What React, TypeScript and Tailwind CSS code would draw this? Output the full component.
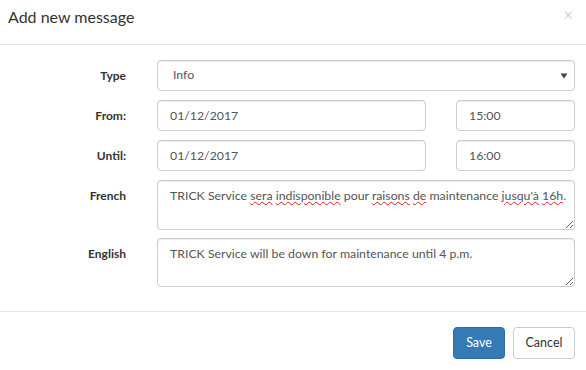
import React from "react";

const font = { fontFamily: "Lato, 'Open Sans', Arial, sans-serif" };

function Caret() {
  return (
    <svg width="8" height="6" viewBox="0 0 8 6" className="pointer-events-none absolute right-[7px] top-[13px]">
      <path d="M0.5 0.5 L7.5 0.5 L4 5.5 Z" fill="#444" />
    </svg>
  );
}

function Label({ children }: { children: React.ReactNode }) {
  return (
    <div className="flex h-[31px] w-[126px] shrink-0 items-center justify-end text-[12px] font-bold text-[#333]">
      {children}
    </div>
  );
}

const inputCls =
  "h-[31px] rounded-[4px] border border-[#ccc] bg-white px-[12px] text-[12.3px] text-[#555] shadow-[inset_0_1px_1px_rgba(0,0,0,0.075)] outline-none";

const Squiggle = ({ children }: { children: React.ReactNode }) => (
  <span className="underline decoration-wavy decoration-[#d0201a] decoration-1 underline-offset-[1px]">
    {children}
  </span>
);

export default function App() {
  return (
    <div className="min-h-screen w-[586px] bg-white text-[#333]" style={font}>
      {/* header */}
      <div className="flex h-[45px] items-start justify-between border-b border-[#e5e5e5] pl-[8px] pr-[13px] pt-[8px]">
        <h4 className="text-[16px] font-normal leading-[18px] text-[#333]">Add new message</h4>
        <button className="text-[17px] leading-[14px] text-black/20">×</button>
      </div>

      {/* body */}
      <div className="flex flex-col pb-[24px] pr-[11px] pt-[15px]">
        <div className="flex items-start">
          <Label>Type</Label>
          <div className="relative ml-[31px] flex-1">
            <select
              className={`${inputCls} w-full appearance-none pl-[15px]`}
              defaultValue="Info"
            >
              <option>Info</option>
              <option>Warning</option>
              <option>Error</option>
            </select>
            <Caret />
          </div>
        </div>

        <div className="mt-[9px] flex items-start">
          <Label>From:</Label>
          <input className={`${inputCls} ml-[31px] w-[269px]`} defaultValue="01/12/2017" />
          <input className={`${inputCls} ml-[30px] min-w-0 flex-1`} defaultValue="15:00" />
        </div>

        <div className="mt-[9px] flex items-start">
          <Label>Until:</Label>
          <input className={`${inputCls} ml-[31px] w-[269px]`} defaultValue="01/12/2017" />
          <input className={`${inputCls} ml-[30px] min-w-0 flex-1`} defaultValue="16:00" />
        </div>

        <div className="mt-[9px] flex items-start">
          <Label>French</Label>
          <div
            className={`${inputCls} ml-[31px] h-[50px] flex-1 resize-y overflow-hidden whitespace-nowrap py-[6px] pr-[2px] leading-[17px]`}
          >
            TRICK Service <Squiggle>sera</Squiggle> <Squiggle>indisponible</Squiggle> pour{" "}
            <Squiggle>raisons</Squiggle> <Squiggle>de</Squiggle> maintenance{" "}
            <Squiggle>jusqu'à</Squiggle> <Squiggle>16h</Squiggle>.
          </div>
        </div>

        <div className="mt-[8px] flex items-start">
          <Label>English</Label>
          <textarea
            className={`${inputCls} ml-[31px] h-[49px] flex-1 resize-y py-[6px] leading-[17px]`}
            defaultValue="TRICK Service will be down for maintenance until 4 p.m."
          />
        </div>
      </div>

      {/* footer */}
      <div className="flex justify-end gap-[8px] border-t border-[#e5e5e5] pr-[11px] pt-[15px]">
        <button className="h-[32px] w-[52px] rounded-[4px] border border-[#2e6da4] bg-[#337ab7] text-[12.5px] text-white">
          Save
        </button>
        <button className="h-[32px] w-[62px] rounded-[4px] border border-[#ccc] bg-white text-[12.5px] text-[#333]">
          Cancel
        </button>
      </div>
    </div>
  );
}
